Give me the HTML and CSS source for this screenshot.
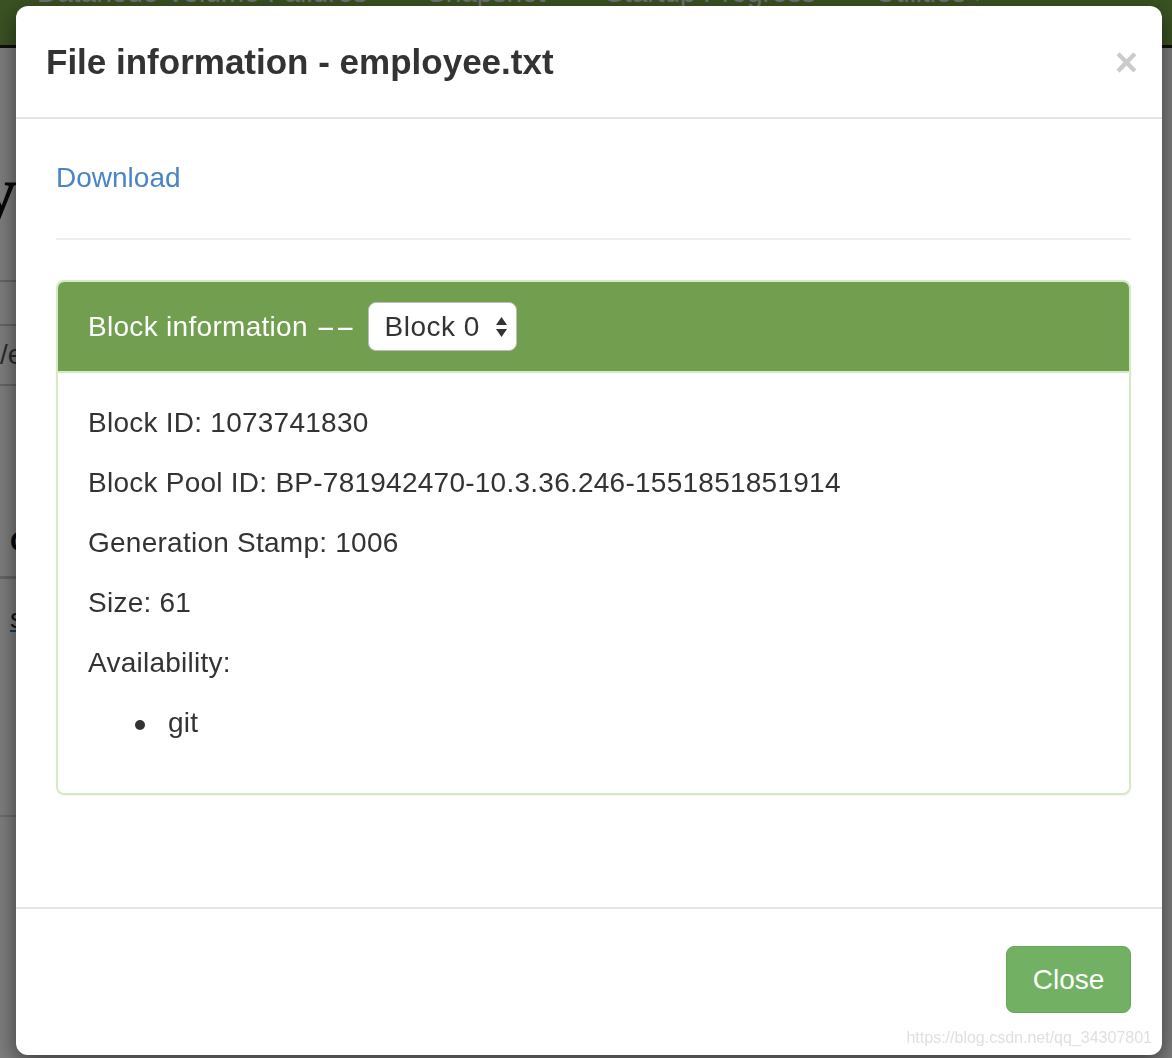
FILE: index.html
```html
<!DOCTYPE html>
<html lang="en">
<head>
  <meta charset="UTF-8">
  <title>Browse Directory</title>
  <link rel="stylesheet" href="styles.css">
</head>
<body>
  <nav class="navbar">
    <ul class="nav-links">
      <li>Datanode Volume Failures</li>
      <li>Snapshot</li>
      <li>Startup Progress</li>
      <li>Utilities <span class="caret">&#9662;</span></li>
    </ul>
  </nav>

  <main class="page-body">
    <h1 class="page-title"><span>Browse Directory</span></h1>
    <hr class="page-rule">
    <div class="path-box">/employee</div>
    <div class="table-head">Contents</div>
    <div class="table-row"><a href="#">supergroup</a></div>
  </main>

  <div class="backdrop"></div>

  <div class="modal">
    <div class="modal-header">
      <h4 class="modal-title">File information - employee.txt</h4>
      <button class="close">&times;</button>
    </div>

    <div class="modal-body">
      <a href="#" class="download-link">Download</a>
      <hr class="divider">

      <div class="panel">
        <div class="panel-heading">
          <span>Block information <span class="dashes">--</span></span>
          <div class="block-select">
            <span>Block 0</span>
            <svg width="13" height="24" viewBox="0 0 13 24">
              <path d="M6.5 2 L12 10 L1 10 Z" fill="#333"/>
              <path d="M6.5 22 L12 14 L1 14 Z" fill="#333"/>
            </svg>
          </div>
        </div>
        <div class="panel-body">
          <p>Block ID: 1073741830</p>
          <p>Block Pool ID: BP-781942470-10.3.36.246-1551851851914</p>
          <p>Generation Stamp: 1006</p>
          <p>Size: 61</p>
          <p>Availability:</p>
          <ul class="hosts">
            <li>git</li>
          </ul>
        </div>
      </div>
    </div>

    <div class="modal-footer">
      <button class="btn-close">Close</button>
    </div>

    <div class="watermark">https://blog.csdn.net/qq_34307801</div>
  </div>
</body>
</html>
```

FILE: styles.css
```css
body {
  margin: 0;
  background-color: #fff;
  font-family: "Liberation Sans", Arial, sans-serif;
  color: #111;
  overflow: hidden;
  height: 1058px;
}
.navbar {
  height: 45px;
  background-color: #76a646;
  border-bottom: 3px solid #1e1e1e;
  overflow: hidden;
}
.nav-links {
  display: flex;
  gap: 60px;
  list-style: none;
  margin: -24px 0 0 0;
  padding: 0 0 0 37px;
  font-size: 28px;
  line-height: 34px;
  color: #e8e8e8;
}
.caret {
  font-size: 18px;
}
.page-body {
  width: 17px;
  overflow: hidden;
}
.page-title {
  display: flex;
  justify-content: flex-end;
  white-space: nowrap;
  margin: 106px 0 0 0;
  font-family: "Liberation Serif", serif;
  font-size: 76px;
  line-height: 76px;
  color: #111;
}
.page-rule {
  border: 0;
  border-top: 2px solid #ccc;
  margin: 50px 0 0 0;
}
.path-box {
  margin-top: 42px;
  height: 58px;
  border-top: 2px solid #ccc;
  border-bottom: 2px solid #ccc;
  font-size: 28px;
  line-height: 58px;
  white-space: nowrap;
  color: #555;
}
.table-head {
  margin-top: 136px;
  height: 54px;
  border-bottom: 3px solid #ccc;
  font-size: 28px;
  font-weight: bold;
  line-height: 40px;
  white-space: nowrap;
  padding-left: 10px;
}
.table-row {
  height: 212px;
  border-bottom: 2px solid #ddd;
  padding: 24px 0 0 10px;
  font-size: 28px;
  white-space: nowrap;
}
.table-row a {
  color: #222;
  text-decoration: underline;
  text-decoration-color: #337ab7;
}
.backdrop {
  position: fixed;
  top: 0;
  left: 0;
  right: 0;
  bottom: 0;
  background-color: rgba(0, 0, 0, 0.5);
}

/* modal */
.modal {
  position: absolute;
  top: 6px;
  left: 16px;
  width: 1146px;
  height: 1049px;
  background-color: #fff;
  border-radius: 12px;
  box-shadow: 0 8px 24px rgba(0, 0, 0, 0.55);
  display: flex;
  flex-direction: column;
  color: #333;
  font-size: 28px;
}
.modal-header {
  display: flex;
  justify-content: space-between;
  align-items: flex-start;
  padding: 30px 22px 30px 30px;
  border-bottom: 2px solid #e5e5e5;
}
.modal-title {
  margin: 0;
  font-size: 35px;
  font-weight: bold;
  line-height: 51px;
  color: #333;
}
.close {
  background: none;
  border: none;
  padding: 0;
  margin: 6px 2px 0 0;
  font-family: "Liberation Sans", Arial, sans-serif;
  font-size: 40px;
  font-weight: bold;
  line-height: 40px;
  color: #000;
  opacity: 0.2;
  cursor: pointer;
}
.modal-body {
  flex: 1;
  padding: 39px 31px 0 40px;
}
.download-link {
  display: block;
  color: #4a84c5;
  text-decoration: none;
  line-height: 40px;
}
.divider {
  border: 0;
  border-top: 2px solid #eee;
  margin: 40px 0;
}
.panel {
  border: 2px solid #d6e9c6;
  border-radius: 8px;
  overflow: hidden;
  box-shadow: 0 1px 2px rgba(0, 0, 0, 0.05);
}
.panel-heading {
  display: flex;
  align-items: center;
  gap: 12px;
  padding: 20px 30px;
  background-color: #719f4f;
  color: #fff;
  border-bottom: 2px solid #d6e9c6;
  line-height: 48px;
  letter-spacing: 0.3px;
}
.dashes {
  display: inline-block;
  letter-spacing: 0;
  transform: scaleX(2.1);
  transform-origin: left center;
  margin-right: 21px;
}
.block-select {
  display: flex;
  align-items: center;
  justify-content: space-between;
  box-sizing: border-box;
  width: 149px;
  height: 49px;
  padding: 0 8px 0 16px;
  background-color: #fff;
  border: 1px solid #bdbdbd;
  border-radius: 8px;
  color: #333;
  letter-spacing: 0.5px;
}
.panel-body {
  padding: 30px;
  letter-spacing: 0.25px;
}
.panel-body p {
  margin: 0 0 20px 0;
  line-height: 40px;
}
.hosts {
  list-style: none;
  margin: 0 0 20px 0;
  padding-left: 80px;
  line-height: 40px;
}
.hosts li::before {
  content: "";
  display: inline-block;
  width: 10px;
  height: 10px;
  margin: 0 23px 0 -33px;
  border-radius: 50%;
  background-color: #333;
  vertical-align: middle;
}
.modal-footer {
  display: flex;
  justify-content: flex-end;
  padding: 37px 31px 42px 30px;
  border-top: 2px solid #e5e5e5;
}
.btn-close {
  width: 125px;
  height: 67px;
  background-color: #72b163;
  border: 1px solid #68a65a;
  border-radius: 8px;
  color: #fff;
  font-family: "Liberation Sans", Arial, sans-serif;
  font-size: 28px;
  cursor: pointer;
}
.watermark {
  position: absolute;
  right: 10px;
  bottom: 8px;
  font-size: 16px;
  color: #e0e0e0;
}
```
